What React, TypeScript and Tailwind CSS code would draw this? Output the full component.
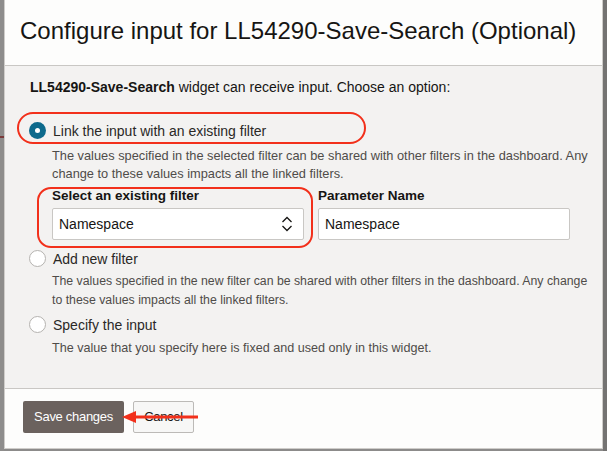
import React from "react";

function Radio({ checked }: { checked?: boolean }) {
  return checked ? (
    <span className="flex h-[17px] w-[17px] shrink-0 items-center justify-center rounded-full bg-[#0e6a8c]">
      <span className="h-[5px] w-[5px] rounded-full bg-white" />
    </span>
  ) : (
    <span className="h-[17px] w-[17px] shrink-0 rounded-full border border-[#b5b3b0] bg-white" />
  );
}

export default function App() {
  return (
    <div className="relative flex h-[451px] w-[607px] bg-[#8c8b8a] font-['Liberation_Sans',Arial,sans-serif]">
      <div className="w-[4px] shrink-0 bg-[#8e8d8c] relative">
        <div className="absolute left-0 top-[136px] h-[2px] w-[4px] bg-[#7a3a3a]" />
      </div>
      <div className="flex h-[449px] w-[599px] flex-col border-l border-r border-b border-[#cfcdca] bg-white">
        <div className="flex h-[66px] shrink-0 items-center border-b border-[#c9c7c4] bg-[#fdfdfc] pb-[3px] pl-[15px]">
          <h1 className="text-[24px] leading-none text-[#161513]">
            Configure input for LL54290-Save-Search (Optional)
          </h1>
        </div>
        <div className="relative flex flex-1 flex-col bg-[#f3f2f1] pl-[25px] pr-[10px] pt-[13px] text-[#161513]">
          <p className="text-[14px] leading-[16px]">
            <b>LL54290-Save-Search</b> widget can receive input. Choose an option:
          </p>

          <div className="mt-[27px] -ml-[1px] flex items-center gap-[7px]">
            <Radio checked />
            <span className="text-[14px] leading-[16px] text-[#2a2826]">Link the input with an existing filter</span>
          </div>
          <p className="mt-[8px] whitespace-nowrap pl-[22px] text-[12.8px] leading-[18px] text-[#4f4c49]">
            The values specified in the selected filter can be shared with other filters in the dashboard. Any
            <br />
            change to these values impacts all the linked filters.
          </p>

          <div className="mt-[5px] flex gap-[14px] pl-[22px]">
            <div className="flex flex-col">
              <label className="text-[13.5px] font-bold leading-[16px] text-[#161513]">Select an existing filter</label>
              <div className="mt-[4px] flex h-[32px] w-[252px] items-center justify-between rounded-[2px] border border-[#c9c7c4] bg-white pl-[6px] pr-[10px]">
                <span className="text-[14px] text-[#161513]">Namespace</span>
                <svg width="12" height="18" viewBox="0 0 12 18" fill="none" stroke="#161513" strokeWidth="1.3">
                  <path d="M1.5 7 L6 2.5 L10.5 7" />
                  <path d="M1.5 11 L6 15.5 L10.5 11" />
                </svg>
              </div>
            </div>
            <div className="flex flex-col">
              <label className="text-[13.5px] font-bold leading-[16px] text-[#161513]">Parameter Name</label>
              <div className="mt-[4px] flex h-[32px] w-[252px] items-center rounded-[2px] border border-[#c9c7c4] bg-white pl-[6px]">
                <span className="text-[14px] text-[#161513]">Namespace</span>
              </div>
            </div>
          </div>

          <div className="mt-[10px] -ml-[1px] flex items-center gap-[7px]">
            <Radio />
            <span className="text-[14px] leading-[16px] text-[#2a2826]">Add new filter</span>
          </div>
          <p className="mt-[5px] whitespace-nowrap pl-[22px] text-[12.3px] leading-[19px] text-[#4f4c49]">
            The values specified in the new filter can be shared with other filters in the dashboard. Any change
            <br />
            to these values impacts all the linked filters.
          </p>

          <div className="mt-[6px] -ml-[1px] flex items-center gap-[7px]">
            <Radio />
            <span className="text-[14px] leading-[16px] text-[#2a2826]">Specify the input</span>
          </div>
          <p className="mt-[6px] whitespace-nowrap pl-[22px] text-[12.6px] leading-[18px] text-[#4f4c49]">
            The value that you specify here is fixed and used only in this widget.
          </p>

          <div className="pointer-events-none absolute left-[12px] top-[46px] h-[32px] w-[349px] rounded-[16px] border-2 border-[#f2301b]" />
          <div className="pointer-events-none absolute left-[32px] top-[121px] h-[61px] w-[276px] rounded-[14px] border-2 border-[#f2301b]" />
        </div>
        <div className="relative flex h-[60px] shrink-0 items-start gap-[9px] border-t border-[#c9c7c4] bg-[#fdfdfc] pl-[18px] pt-[12px]">
          <button className="h-[32px] w-[101px] rounded-[2px] bg-[#6b625e] text-[13px] tracking-[-0.3px] text-white">Save changes</button>
          <button className="h-[32px] w-[61px] rounded-[2px] border border-[#bcbab7] bg-[#f7f7f6] text-[13px] tracking-[-0.3px] text-[#161513]">Cancel</button>
          <svg className="pointer-events-none absolute left-[117px] top-[21px]" width="76" height="14" viewBox="0 0 76 14">
            <path d="M0 7 L14 1 L14 13 Z" fill="#f2301b" />
            <rect x="12" y="5.5" width="64" height="3" fill="#f2301b" />
          </svg>
        </div>
      </div>
      <div className="w-[4px] shrink-0 bg-[#747372]" />
    </div>
  );
}
